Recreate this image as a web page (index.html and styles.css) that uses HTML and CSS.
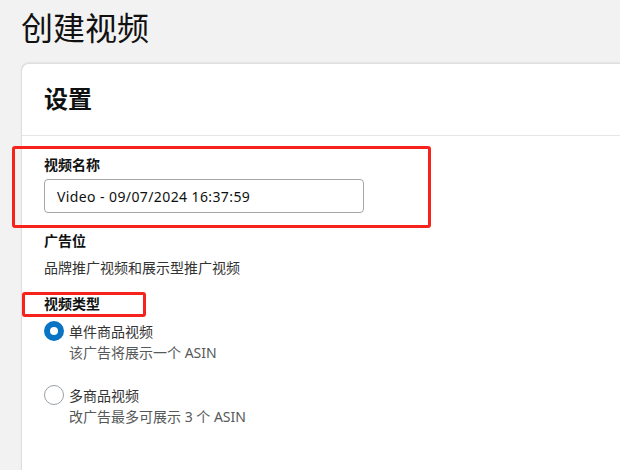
FILE: index.html
```html
<!DOCTYPE html>
<html lang="zh-CN">
<head>
    <meta charset="UTF-8">
    <title>创建视频</title>
    <link rel="stylesheet" href="styles.css">
</head>
<body>
    <div class="page">
        <h1 class="page-title">创建视频</h1>

        <div class="card">
            <div class="card-header">
                <h2 class="card-title">设置</h2>
            </div>

            <div class="card-body">
                <div class="field">
                    <label class="field-label" for="video-name">视频名称</label>
                    <input class="text-input" id="video-name" type="text" value="Video - 09/07/2024 16:37:59">
                </div>

                <div class="field field-placement">
                    <div class="field-label">广告位</div>
                    <div class="field-value">品牌推广视频和展示型推广视频</div>
                </div>

                <div class="field field-type">
                    <div class="field-label">视频类型</div>
                    <div class="radio-group">
                        <div class="radio-option">
                            <span class="radio checked"></span>
                            <div class="radio-text">
                                <div class="radio-label">单件商品视频</div>
                                <div class="radio-desc">该广告将展示一个 ASIN</div>
                            </div>
                        </div>
                        <div class="radio-option">
                            <span class="radio"></span>
                            <div class="radio-text">
                                <div class="radio-label">多商品视频</div>
                                <div class="radio-desc">改广告最多可展示 3 个 ASIN</div>
                            </div>
                        </div>
                    </div>
                </div>
            </div>
        </div>
    </div>

    <!-- annotation boxes -->
    <div class="mark mark-name"></div>
    <div class="mark mark-type"></div>
</body>
</html>
```

FILE: styles.css
```css
* {
    margin: 0;
    padding: 0;
    box-sizing: border-box;
}

body {
    background: #f2f2f2;
    font-family: "Noto Sans", "Noto Sans CJK SC", sans-serif;
    color: #0f1111;
    overflow: hidden;
    width: 620px;
    height: 470px;
    position: relative;
}

.page {
    padding: 8px 0 0 21px;
}

.page-title {
    font-size: 32px;
    line-height: 40px;
    font-weight: 400;
    color: #111;
}

.card {
    margin-top: 15px;
    width: 599px;
    height: 407px;
    background: white;
    border: 1px solid #dedede;
    border-right: none;
    border-bottom: none;
    border-radius: 8px 0 0 0;
    box-shadow: 0 -1px 2px rgba(0,0,0,0.06);
}

.card-header {
    padding: 19px 22px 20px;
    border-bottom: 1px solid #e6e6e6;
}

.card-title {
    font-size: 24px;
    line-height: 32px;
    font-weight: 700;
}

.card-body {
    padding: 19px 22px;
}

.field-label {
    display: block;
    font-size: 14px;
    line-height: 20px;
    font-weight: 700;
    margin-bottom: 4px;
}

.text-input {
    width: 320px;
    height: 34px;
    border: 1px solid #a6a6a6;
    border-radius: 4px;
    padding: 0 12px;
    font-family: inherit;
    font-size: 14px;
    letter-spacing: 0.4px;
    color: #0f1111;
    background: white;
    outline: none;
}

.field-placement {
    margin-top: 18px;
}

.field-placement .field-label {
    margin-bottom: 7px;
}

.field-value {
    font-size: 14px;
    line-height: 20px;
    color: #333;
}

.field-type {
    margin-top: 16px;
}

.field-type .field-label {
    margin-bottom: 7px;
}

.radio-group {
    display: flex;
    flex-direction: column;
    gap: 22px;
}

.radio-option {
    display: flex;
    align-items: flex-start;
    gap: 5px;
}

.radio {
    width: 20px;
    height: 20px;
    border-radius: 50%;
    border: 1px solid #9aa0a6;
    background: white;
    flex-shrink: 0;
}

.radio.checked {
    border: 6px solid #0a74c4;
}

.radio-text {
    font-size: 14px;
    line-height: 21px;
}

.radio-label {
    color: #333;
}

.radio-desc {
    color: #565959;
}

.mark {
    position: absolute;
    border: 3px solid #f5231b;
    border-radius: 3px;
}

.mark-name {
    left: 12px;
    top: 146px;
    width: 419px;
    height: 82px;
}

.mark-type {
    left: 22px;
    top: 292px;
    width: 124px;
    height: 25px;
}
```
